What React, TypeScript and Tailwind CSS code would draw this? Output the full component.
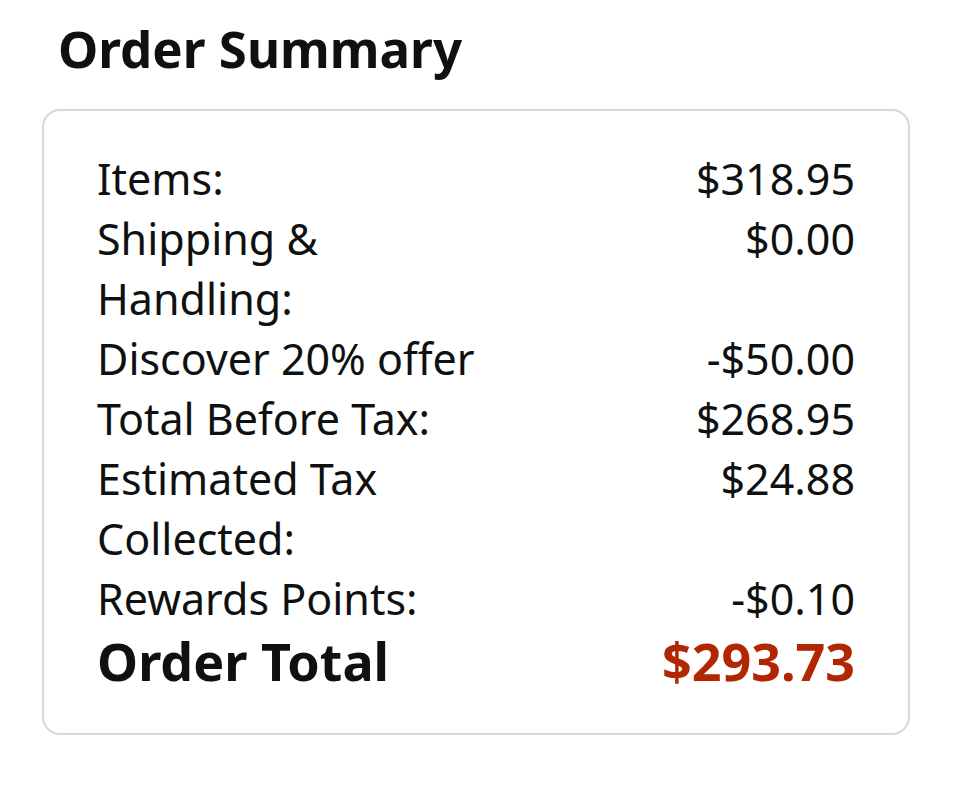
const rows: { label: string; value: string }[] = [
  { label: "Items:", value: "$318.95" },
  { label: "Shipping & Handling:", value: "$0.00" },
  { label: "Discover 20% offer", value: "-$50.00" },
  { label: "Total Before Tax:", value: "$268.95" },
  { label: "Estimated Tax Collected:", value: "$24.88" },
  { label: "Rewards Points:", value: "-$0.10" },
];

export default function App() {
  return (
    <div className="min-h-[800px] w-[954px] bg-white px-[42px] pt-[16px] text-[#0f1111] font-['Noto_Sans',sans-serif]">
      <h1 className="pl-[16px] text-[51px] font-bold leading-[64px]">Order Summary</h1>
      <div className="mt-[29px] w-[868px] rounded-[18px] border-2 border-[#d5d9d9] px-[53px] pt-[38px] pb-[40px]">
        {rows.map((r) => (
          <div key={r.label} className="flex justify-between text-[43px] leading-[60px]">
            <span className="w-[415px]">{r.label}</span>
            <span className="text-right">{r.value}</span>
          </div>
        ))}
        <div className="flex justify-between text-[52px] font-bold leading-[64px]">
          <span>Order Total</span>
          <span className="text-[#b12704]">$293.73</span>
        </div>
      </div>
    </div>
  );
}
